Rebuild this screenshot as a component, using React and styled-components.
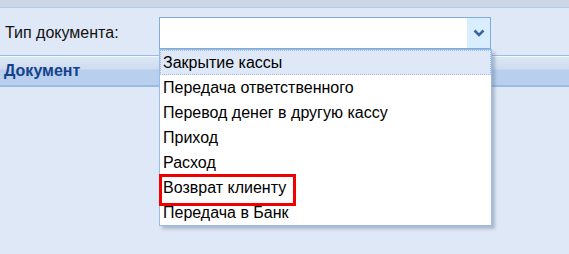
import React from "react";
import styled, { createGlobalStyle } from "styled-components";

const Global = createGlobalStyle`
  html, body { margin: 0; padding: 0; }
  body {
    background: #dfe8f6;
    font-family: "Liberation Sans", Arial, sans-serif;
    width: 569px;
    height: 254px;
    overflow: hidden;
  }
`;

const Page = styled.div`
  position: relative;
  width: 569px;
  height: 254px;
  background: #dfe8f6;
  overflow: hidden;
`;

const TopStrip = styled.div`
  height: 7px;
  background: #cbd7e7;
  border-bottom: 1px solid #b3c9e8;
`;

const FieldRow = styled.div`
  display: flex;
  align-items: center;
  padding: 9px 0 0 5px;
`;

const Label = styled.label`
  width: 154px;
  font-size: 16px;
  color: #111;
`;

const Combo = styled.div`
  display: flex;
  width: 332px;
  height: 32px;
  box-sizing: border-box;
  border: 1px solid #7eadd9;
  background: #fff;
`;

const ComboInput = styled.div`
  flex: 1;
`;

const Trigger = styled.div`
  width: 23px;
  display: flex;
  align-items: center;
  justify-content: center;
  background: #d8edfd;
`;

const Header = styled.div`
  margin-top: 6px;
  height: 29px;
  border-top: 1px solid #99bbe8;
  border-bottom: 2px solid #99bbe8;
  box-shadow: inset 0 1px 0 #f4f8fd;
  background: linear-gradient(
    to bottom,
    #dde8f5 0px,
    #cddcef 13px,
    #b9cfee 14px,
    #b9cfee 100%
  );
  display: flex;
  align-items: center;
  padding-left: 4px;
`;

const HeaderTitle = styled.span`
  font-weight: bold;
  font-size: 16px;
  color: #15428b;
`;

const List = styled.ul`
  position: absolute;
  left: 159px;
  top: 49px;
  width: 333px;
  box-sizing: border-box;
  margin: 0;
  padding: 0;
  list-style: none;
  background: #fff;
  border: 1px solid #99bbe8;
  box-shadow: 3px 3px 3px rgba(80, 100, 130, 0.35);
`;

const Item = styled.li`
  height: 25px;
  box-sizing: border-box;
  display: flex;
  align-items: center;
  padding-left: ${(p) => (p.$active ? "2px" : "3px")};
  font-size: 16px;
  color: #000;
  white-space: nowrap;
  background: ${(p) => (p.$active ? "#dfe8f6" : "#fff")};
  border: ${(p) => (p.$active ? "1px dotted #a3bae9" : "none")};
`;

const Highlight = styled.div`
  position: absolute;
  left: 159px;
  top: 174px;
  width: 137px;
  height: 32px;
  box-sizing: border-box;
  border: 3px solid #f00000;
  pointer-events: none;
`;

const items = [
  "Закрытие кассы",
  "Передача ответственного",
  "Перевод денег в другую кассу",
  "Приход",
  "Расход",
  "Возврат клиенту",
  "Передача в Банк",
];

export default function App() {
  return (
    <Page>
      <Global />
      <TopStrip />
      <FieldRow>
        <Label>Тип документа:</Label>
        <Combo>
          <ComboInput />
          <Trigger>
            <svg width="12" height="8" viewBox="0 0 12 8">
              <path d="M1.5 1.5 L6 6 L10.5 1.5" fill="none" stroke="#3d64a5" strokeWidth="2.6" />
            </svg>
          </Trigger>
        </Combo>
      </FieldRow>
      <Header>
        <HeaderTitle>Документ</HeaderTitle>
      </Header>
      <List>
        {items.map((t, i) => (
          <Item key={t} $active={i === 0}>
            {t}
          </Item>
        ))}
      </List>
      <Highlight />
    </Page>
  );
}
